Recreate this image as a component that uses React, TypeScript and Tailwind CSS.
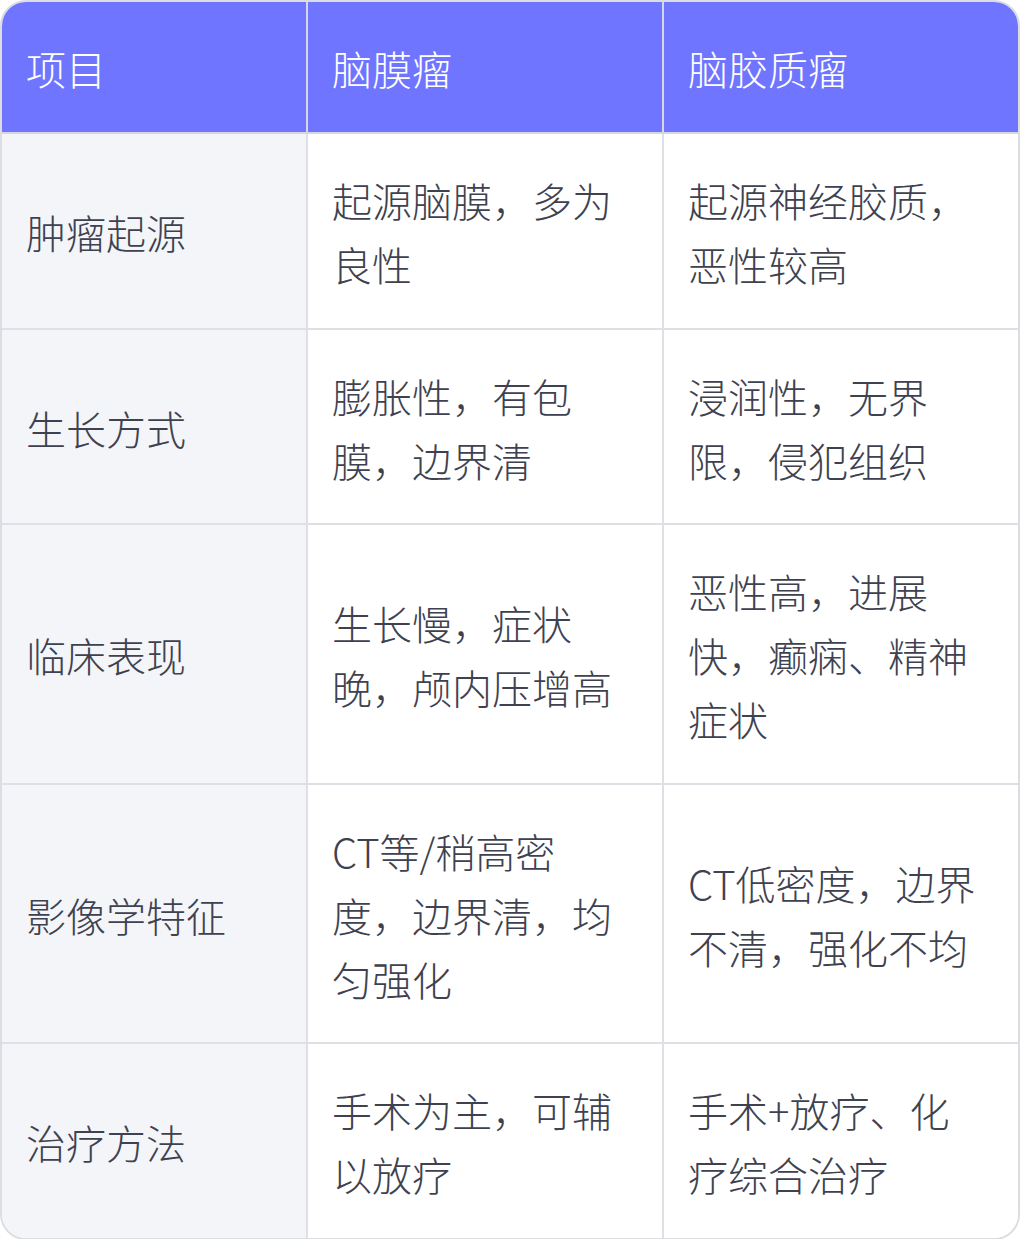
const HEADERS = ['项目', '脑膜瘤', '脑胶质瘤']

const ROWS: [string, string, string][] = [
  ['肿瘤起源', '起源脑膜，多为良性', '起源神经胶质，恶性较高'],
  ['生长方式', '膨胀性，有包膜，边界清', '浸润性，无界限，侵犯组织'],
  ['临床表现', '生长慢，症状晚，颅内压增高', '恶性高，进展快，癫痫、精神症状'],
  ['影像学特征', 'CT等/稍高密度，边界清，均匀强化', 'CT低密度，边界不清，强化不均'],
  ['治疗方法', '手术为主，可辅以放疗', '手术+放疗、化疗综合治疗'],
]

const FONT = { fontFamily: '"Noto Sans CJK SC", "Noto Sans", sans-serif' }

export default function App() {
  return (
    <div className="w-[1020px] bg-white" style={FONT}>
      <div className="overflow-hidden rounded-[26px] border-2 border-[#dcdde2]">
        <table className="w-full table-fixed border-separate border-spacing-0 text-[40px] font-light leading-[64px] [text-spacing-trim:space-all]">
          <colgroup>
            <col className="w-[306px]" />
            <col className="w-[356px]" />
            <col className="w-[354px]" />
          </colgroup>
          <thead>
            <tr className="bg-[#7075ff]">
              {HEADERS.map((h, i) => (
                <th
                  key={h}
                  className={`border-b-2 border-[#d5d6e0] pt-[34px] pb-[32px] pl-[24px] pr-[40px] text-left font-light text-white ${
                    i < 2 ? 'border-r-2' : ''
                  }`}
                >
                  {h}
                </th>
              ))}
            </tr>
          </thead>
          <tbody>
            {ROWS.map((row, r) => (
              <tr key={row[0]}>
                {row.map((cell, i) => (
                  <td
                    key={i}
                    className={`border-[#dfe0e5] pt-[34px] pb-[31.5px] pl-[24px] pr-[40px] align-middle text-[#3e4250] ${
                      i === 0 ? 'bg-[#f4f5f9]' : 'bg-white'
                    } ${i < 2 ? 'border-r-2' : ''} ${r < ROWS.length - 1 ? 'border-b-2' : ''}`}
                  >
                    {cell}
                  </td>
                ))}
              </tr>
            ))}
          </tbody>
        </table>
      </div>
    </div>
  )
}
